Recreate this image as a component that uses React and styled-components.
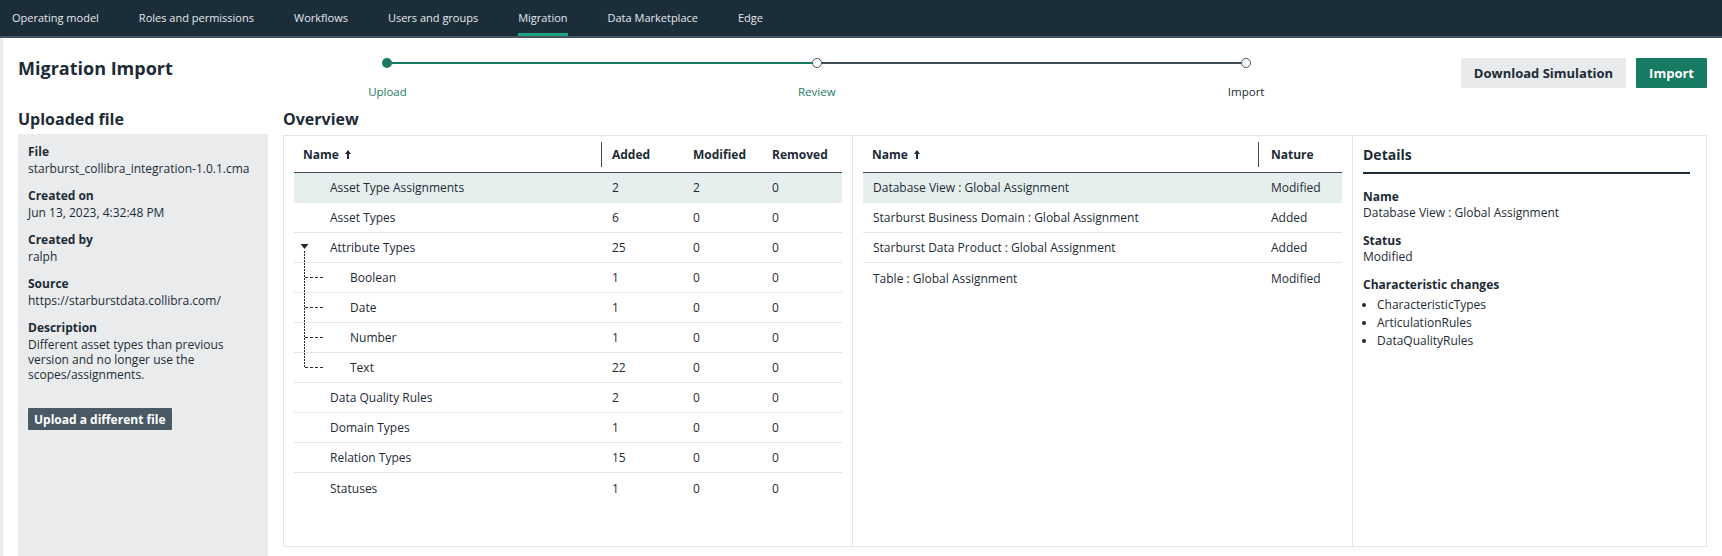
import React from "react";
import styled, { createGlobalStyle } from "styled-components";

const GlobalStyle = createGlobalStyle`
  html, body { margin: 0; padding: 0; }
  body {
    font-family: "Open Sans", "Noto Sans", sans-serif;
    color: #1d2b36;
    background: #ffffff;
    height: 556px;
    overflow: hidden;
  }
  * { box-sizing: border-box; }
`;

const Nav = styled.nav`
  height: 38px;
  background: #1c2d3a;
  border-bottom: 2px solid #45555f;
  display: flex;
  align-items: stretch;
  gap: 40px;
  padding-left: 12px;
`;

const NavItem = styled.a`
  display: flex;
  align-items: center;
  font-size: 11px;
  color: #e3e8ec;
  text-decoration: none;
  border-bottom: 3px solid ${(p) => (p.$active ? "#21a382" : "transparent")};
  padding-top: 2px;
`;

const Page = styled.div`
  display: flex;
  height: 518px;
`;

const Strip = styled.div`
  width: 3px;
  background: #eaecee;
`;

const Main = styled.main`
  flex: 1;
  padding: 20px 15px 0 15px;
  display: flex;
  flex-direction: column;
  min-width: 0;
`;

const HeaderRow = styled.header`
  display: grid;
  grid-template-columns: auto 1fr auto;
  align-items: start;
  margin-bottom: 10px;
`;

const Title = styled.h1`
  margin: 0;
  font-size: 18px;
  line-height: 20px;
  font-weight: 700;
`;

const Stepper = styled.div`
  display: grid;
  grid-template-columns: repeat(3, 1fr);
`;

const Step = styled.div`
  display: flex;
  flex-direction: column;
  align-items: center;
`;

const Track = styled.div`
  display: flex;
  align-items: center;
  width: 100%;
  height: 10px;
`;

const Line = styled.div`
  flex: 1;
  height: 1.5px;
  background: ${(p) => p.$color || "transparent"};
`;

const Dot = styled.div`
  width: 10px;
  height: 10px;
  border-radius: 50%;
  background: ${(p) => (p.$done ? "#1a7a62" : "#ffffff")};
  border: ${(p) => (p.$done ? "none" : "1.5px solid #4a5863")};
`;

const StepLabel = styled.div`
  margin-top: 16px;
  font-size: 11.5px;
  line-height: 15px;
  color: ${(p) => (p.$active ? "#1a7a62" : "#1d2b36")};
`;

const Actions = styled.div`
  display: flex;
  gap: 10px;
`;

const Button = styled.button`
  height: 30px;
  padding: 0 13px;
  border: none;
  border-radius: 1px;
  font-family: inherit;
  font-size: 13px;
  font-weight: 700;
  background: ${(p) => (p.$primary ? "#177a62" : "#e8eaec")};
  color: ${(p) => (p.$primary ? "#ffffff" : "#1d2b36")};
`;

const Body = styled.div`
  flex: 1;
  display: grid;
  grid-template-columns: 250px 1fr;
  column-gap: 15px;
  min-height: 0;
`;

const Column = styled.section`
  display: flex;
  flex-direction: column;
  min-width: 0;
`;

const SectionHeading = styled.h2`
  margin: 0 0 5px 0;
  font-size: 16px;
  line-height: 20px;
  font-weight: 700;
`;

const FilePanel = styled.div`
  flex: 1;
  background: #e9ebed;
  padding: 10px 10px;
`;

const Field = styled.div`
  margin-bottom: 12px;
`;

const FieldLabel = styled.div`
  font-size: 12px;
  line-height: 15px;
  font-weight: 700;
  margin-bottom: 2px;
`;

const FieldValue = styled.div`
  font-size: 12px;
  line-height: 15px;
`;

const UploadButton = styled.button`
  margin-top: 14px;
  height: 22px;
  padding: 0 6px;
  border: none;
  border-radius: 1px;
  background: #4a5a65;
  color: #ffffff;
  font-family: inherit;
  font-size: 12px;
  font-weight: 700;
`;

const OverviewBox = styled.div`
  margin-top: 1px;
  height: 412px;
  border: 1px solid #e3e6e8;
  display: grid;
  grid-template-columns: 569px 500px 1fr;
`;

const Pane = styled.div`
  border-right: ${(p) => (p.$last ? "none" : "1px solid #e3e6e8")};
  padding: ${(p) => p.$pad || "0 10px"};
  min-width: 0;
`;

const HeadRow = styled.div`
  display: grid;
  grid-template-columns: ${(p) => p.$cols};
  align-items: center;
  height: 37px;
  border-bottom: 1px solid #3d4b55;
`;

const HeadCell = styled.div`
  display: flex;
  align-items: center;
  gap: 6px;
  height: 25px;
  padding-left: ${(p) => p.$pl || "10px"};
  font-size: 12px;
  font-weight: 700;
  border-right: ${(p) => (p.$divider ? "1px solid #3d4b55" : "none")};
`;

const Row = styled.div`
  display: grid;
  grid-template-columns: ${(p) => p.$cols};
  align-items: stretch;
  height: 30px;
  border-bottom: ${(p) => (p.$last ? "none" : "1px solid #e4e7ea")};
  background: ${(p) => (p.$selected ? "#e6efed" : "transparent")};
  font-size: 12px;
`;

const Cell = styled.div`
  display: flex;
  align-items: center;
  padding-left: ${(p) => p.$pl || "10px"};
  white-space: nowrap;
`;

const NameCell = styled.div`
  display: flex;
  align-items: stretch;
  white-space: nowrap;
`;

const Gutter = styled.svg`
  flex: none;
  width: ${(p) => p.$w}px;
  height: 29px;
`;

const NameText = styled.span`
  display: flex;
  align-items: center;
`;

const DetailsHeading = styled.div`
  height: 38px;
  display: flex;
  align-items: center;
  border-bottom: 2px solid #1d2b36;
  font-size: 14px;
  font-weight: 700;
`;

const DetailsBody = styled.div`
  padding-top: 15px;
`;

const DetailLabel = styled.div`
  font-size: 12px;
  line-height: 16px;
  font-weight: 700;
`;

const DetailValue = styled.div`
  font-size: 12px;
  line-height: 16px;
  margin-bottom: 12px;
`;

const ChangeList = styled.ul`
  margin: 3px 0 0 0;
  padding-left: 14px;
  font-size: 12px;
  line-height: 18px;
`;

const SortArrow = () => (
  <svg width="6" height="9" viewBox="0 0 6 9">
    <path d="M3 0 L6 4 L4 4 L4 9 L2 9 L2 4 L0 4 Z" fill="#1d2b36" />
  </svg>
);

const TreeGutter = ({ kind }) => {
  if (kind === "parent") {
    return (
      <Gutter $w={36} viewBox="0 0 36 29">
        <path d="M6.5 11 L14.5 11 L10.5 16 Z" fill="#1d2b36" />
        <line x1="10.5" y1="18" x2="10.5" y2="29" stroke="#1d2b36" strokeWidth="1" strokeDasharray="2 1" />
      </Gutter>
    );
  }
  if (kind === "child" || kind === "lastChild") {
    return (
      <Gutter $w={56} viewBox="0 0 56 29">
        <line x1="10.5" y1="0" x2="10.5" y2={kind === "lastChild" ? 15 : 29} stroke="#1d2b36" strokeWidth="1" strokeDasharray="2 1" />
        <line x1="11" y1="14.5" x2="30" y2="14.5" stroke="#1d2b36" strokeWidth="1" strokeDasharray="3 2" />
      </Gutter>
    );
  }
  return <Gutter $w={36} viewBox="0 0 36 29" />;
};

const overviewRows = [
  { name: "Asset Type Assignments", a: 2, m: 2, r: 0, selected: true },
  { name: "Asset Types", a: 6, m: 0, r: 0 },
  { name: "Attribute Types", a: 25, m: 0, r: 0, kind: "parent" },
  { name: "Boolean", a: 1, m: 0, r: 0, kind: "child" },
  { name: "Date", a: 1, m: 0, r: 0, kind: "child" },
  { name: "Number", a: 1, m: 0, r: 0, kind: "child" },
  { name: "Text", a: 22, m: 0, r: 0, kind: "lastChild" },
  { name: "Data Quality Rules", a: 2, m: 0, r: 0 },
  { name: "Domain Types", a: 1, m: 0, r: 0 },
  { name: "Relation Types", a: 15, m: 0, r: 0 },
  { name: "Statuses", a: 1, m: 0, r: 0 },
];

const changes = [
  { name: "Database View : Global Assignment", nature: "Modified", selected: true },
  { name: "Starburst Business Domain : Global Assignment", nature: "Added" },
  { name: "Starburst Data Product : Global Assignment", nature: "Added" },
  { name: "Table : Global Assignment", nature: "Modified" },
];

const navItems = [
  "Operating model",
  "Roles and permissions",
  "Workflows",
  "Users and groups",
  "Migration",
  "Data Marketplace",
  "Edge",
];

const leftCols = "308px 81px 79px 1fr";
const midCols = "396px 1fr";

export default function App() {
  return (
    <>
      <GlobalStyle />
      <Nav>
        {navItems.map((n) => (
          <NavItem key={n} $active={n === "Migration"}>
            {n}
          </NavItem>
        ))}
      </Nav>
      <Page>
        <Strip />
        <Main>
          <HeaderRow>
            <Title>Migration Import</Title>
            <Stepper>
              <Step>
                <Track>
                  <Line />
                  <Dot $done />
                  <Line $color="#1a7a62" />
                </Track>
                <StepLabel $active>Upload</StepLabel>
              </Step>
              <Step>
                <Track>
                  <Line $color="#1a7a62" />
                  <Dot />
                  <Line $color="#3d4b55" />
                </Track>
                <StepLabel $active>Review</StepLabel>
              </Step>
              <Step>
                <Track>
                  <Line $color="#3d4b55" />
                  <Dot />
                  <Line />
                </Track>
                <StepLabel>Import</StepLabel>
              </Step>
            </Stepper>
            <Actions>
              <Button>Download Simulation</Button>
              <Button $primary>Import</Button>
            </Actions>
          </HeaderRow>
          <Body>
            <Column>
              <SectionHeading>Uploaded file</SectionHeading>
              <FilePanel>
                <Field>
                  <FieldLabel>File</FieldLabel>
                  <FieldValue>starburst_collibra_integration-1.0.1.cma</FieldValue>
                </Field>
                <Field>
                  <FieldLabel>Created on</FieldLabel>
                  <FieldValue>Jun 13, 2023, 4:32:48 PM</FieldValue>
                </Field>
                <Field>
                  <FieldLabel>Created by</FieldLabel>
                  <FieldValue>ralph</FieldValue>
                </Field>
                <Field>
                  <FieldLabel>Source</FieldLabel>
                  <FieldValue>https://starburstdata.collibra.com/</FieldValue>
                </Field>
                <Field>
                  <FieldLabel>Description</FieldLabel>
                  <FieldValue>
                    Different asset types than previous version and no longer use the
                    scopes/assignments.
                  </FieldValue>
                </Field>
                <UploadButton>Upload a different file</UploadButton>
              </FilePanel>
            </Column>
            <Column>
              <SectionHeading>Overview</SectionHeading>
              <OverviewBox>
                <Pane>
                  <HeadRow $cols={leftCols}>
                    <HeadCell $pl="9px" $divider>
                      Name <SortArrow />
                    </HeadCell>
                    <HeadCell>Added</HeadCell>
                    <HeadCell>Modified</HeadCell>
                    <HeadCell>Removed</HeadCell>
                  </HeadRow>
                  {overviewRows.map((r, i) => (
                    <Row
                      key={r.name}
                      $cols={leftCols}
                      $selected={r.selected}
                      $last={i === overviewRows.length - 1}
                    >
                      <NameCell>
                        <TreeGutter kind={r.kind} />
                        <NameText>{r.name}</NameText>
                      </NameCell>
                      <Cell>{r.a}</Cell>
                      <Cell>{r.m}</Cell>
                      <Cell>{r.r}</Cell>
                    </Row>
                  ))}
                </Pane>
                <Pane>
                  <HeadRow $cols={midCols}>
                    <HeadCell $pl="9px" $divider>
                      Name <SortArrow />
                    </HeadCell>
                    <HeadCell $pl="12px">Nature</HeadCell>
                  </HeadRow>
                  {changes.map((c, i) => (
                    <Row
                      key={c.name}
                      $cols={midCols}
                      $selected={c.selected}
                      $last={i === changes.length - 1}
                    >
                      <Cell>{c.name}</Cell>
                      <Cell $pl="12px">{c.nature}</Cell>
                    </Row>
                  ))}
                </Pane>
                <Pane $last $pad="0 16px 0 10px">
                  <DetailsHeading>Details</DetailsHeading>
                  <DetailsBody>
                    <DetailLabel>Name</DetailLabel>
                    <DetailValue>Database View : Global Assignment</DetailValue>
                    <DetailLabel>Status</DetailLabel>
                    <DetailValue>Modified</DetailValue>
                    <DetailLabel>Characteristic changes</DetailLabel>
                    <ChangeList>
                      <li>CharacteristicTypes</li>
                      <li>ArticulationRules</li>
                      <li>DataQualityRules</li>
                    </ChangeList>
                  </DetailsBody>
                </Pane>
              </OverviewBox>
            </Column>
          </Body>
        </Main>
      </Page>
    </>
  );
}
